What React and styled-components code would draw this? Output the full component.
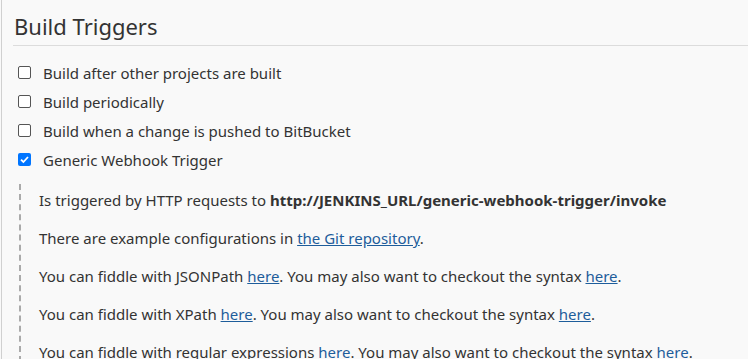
import React from 'react';
import styled, { createGlobalStyle } from 'styled-components';

const GlobalStyle = createGlobalStyle`
  body {
    margin: 0;
    background: #f9f9f9;
    font-family: "Noto Sans", "Open Sans", sans-serif;
    color: #333;
  }
`;

const Page = styled.div`
  margin-left: 1px;
  border-left: 1px solid #d0d0d0;
  min-height: 359px;
  padding-top: 13px;
`;

const SectionTitle = styled.h2`
  margin: 0 0 0 11px;
  padding: 0 0 6px 1px;
  font-size: 22px;
  font-weight: 400;
  line-height: 26px;
  color: #333;
  border-bottom: 1px solid #dcdcdc;
`;

const Options = styled.div`
  display: flex;
  flex-direction: column;
  padding: 12px 0 0 16px;
`;

const OptionRow = styled.label`
  display: flex;
  align-items: center;
  gap: 12px;
  height: 29px;
  font-size: 15px;
`;

const Box = styled.span`
  width: 13px;
  height: 13px;
  box-sizing: border-box;
  border-radius: 2px;
  border: ${p => (p.checked ? 'none' : '1px solid #555')};
  background: ${p => (p.checked ? '#0075ff' : '#fff')};
  display: flex;
  align-items: center;
  justify-content: center;
`;

const Details = styled.div`
  margin: 10px 0 0 17px;
  border-left: 2px dashed #aaa;
  padding: 6px 0 0 18px;
`;

const Para = styled.p`
  margin: 0 0 18px;
  font-size: 15px;
  line-height: 20px;
`;

const Link = styled.a`
  color: #1e5d9b;
  text-decoration: underline;
`;

function Checkbox({ checked }) {
  return (
    <Box checked={checked}>
      {checked && (
        <svg width="11" height="11" viewBox="0 0 11 11">
          <path d="M2 5.6 L4.4 8 L9 3" fill="none" stroke="#fff" strokeWidth="1.8" />
        </svg>
      )}
    </Box>
  );
}

const options = [
  { label: 'Build after other projects are built', checked: false },
  { label: 'Build periodically', checked: false },
  { label: 'Build when a change is pushed to BitBucket', checked: false },
  { label: 'Generic Webhook Trigger', checked: true },
];

export default function App() {
  return (
    <>
      <GlobalStyle />
      <Page>
        <SectionTitle>Build Triggers</SectionTitle>
        <Options>
          {options.map(o => (
            <OptionRow key={o.label}>
              <Checkbox checked={o.checked} />
              {o.label}
            </OptionRow>
          ))}
        </Options>
        <Details>
          <Para>
            Is triggered by HTTP requests to{' '}
            <strong>http://JENKINS_URL/generic-webhook-trigger/invoke</strong>
          </Para>
          <Para>
            There are example configurations in <Link href="#">the Git repository</Link>.
          </Para>
          <Para>
            You can fiddle with JSONPath <Link href="#">here</Link>. You may also want to
            checkout the syntax <Link href="#">here</Link>.
          </Para>
          <Para>
            You can fiddle with XPath <Link href="#">here</Link>. You may also want to checkout
            the syntax <Link href="#">here</Link>.
          </Para>
          <Para>
            You can fiddle with regular expressions <Link href="#">here</Link>. You may also want
            to checkout the syntax <Link href="#">here</Link>.
          </Para>
        </Details>
      </Page>
    </>
  );
}
